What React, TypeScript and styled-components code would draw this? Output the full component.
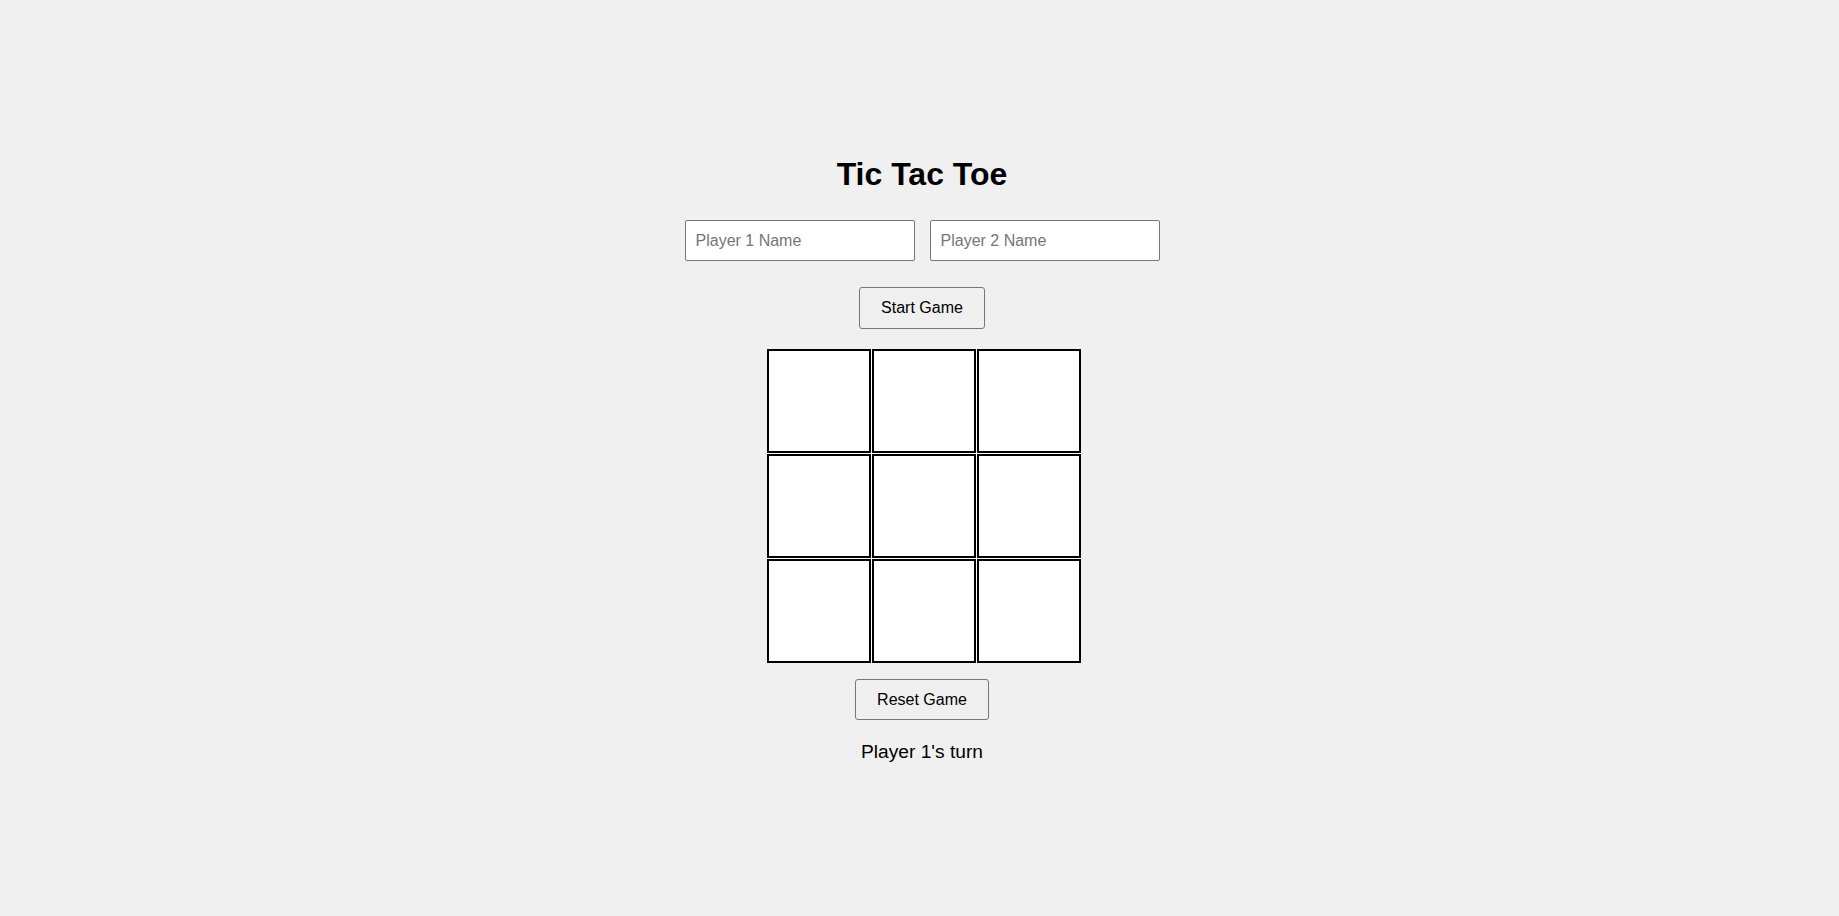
import React, { useState } from "react";
import styled, { createGlobalStyle } from "styled-components";

const GlobalStyle = createGlobalStyle`
  html, body {
    margin: 0;
    padding: 0;
    background: #f0f0f0;
  }
  body {
    font-family: "Liberation Sans", Arial, sans-serif;
    color: #000;
  }
`;

const Page = styled.div`
  display: flex;
  flex-direction: column;
  align-items: center;
  min-height: 916px;
  box-sizing: border-box;
  padding: 156px 0 0 5px;
`;

const Title = styled.h1`
  margin: 0;
  font-size: 32px;
  line-height: 37px;
  font-weight: 700;
`;

const PlayerRow = styled.div`
  display: flex;
  gap: 15px;
  margin-top: 27px;
`;

const NameInput = styled.input`
  box-sizing: border-box;
  width: 230px;
  height: 41px;
  padding: 0 10px;
  font-family: "Liberation Sans", Arial, sans-serif;
  font-size: 16px;
  color: #000;
  background: #fff;
  border: 1px solid #767676;
  border-radius: 2px;
  outline: none;
  &::placeholder {
    color: #757575;
  }
`;

const ActionButton = styled.button<{ $top: number; $height: number }>`
  box-sizing: border-box;
  height: ${(p) => p.$height}px;
  margin-top: ${(p) => p.$top}px;
  padding: 0 21px;
  font-family: "Liberation Sans", Arial, sans-serif;
  font-size: 16px;
  color: #000;
  background: #efefef;
  border: 1px solid #767676;
  border-radius: 3px;
  cursor: pointer;
`;

const Board = styled.div`
  display: grid;
  grid-template-columns: repeat(3, 104px);
  grid-template-rows: repeat(3, 104px);
  gap: 1px;
  margin: 20px 0 0 4px;
  background: #fff;
`;

const Cell = styled.button`
  box-sizing: border-box;
  width: 104px;
  height: 104px;
  padding: 0;
  background: #fff;
  border: 2px solid #000;
  border-radius: 0;
  font-family: "Liberation Sans", Arial, sans-serif;
  font-size: 48px;
  font-weight: 700;
  cursor: pointer;
`;

const Status = styled.p`
  margin: 21px 0 0;
  font-size: 19.2px;
  line-height: 22px;
`;

export default function App() {
  const [p1, setP1] = useState("");
  const [p2, setP2] = useState("");
  const [cells, setCells] = useState<string[]>(Array(9).fill(""));
  const [turn, setTurn] = useState(0);

  const name1 = p1 || "Player 1";
  const name2 = p2 || "Player 2";

  const play = (i: number) => {
    if (cells[i]) return;
    const next = cells.slice();
    next[i] = turn === 0 ? "X" : "O";
    setCells(next);
    setTurn(turn === 0 ? 1 : 0);
  };

  const reset = () => {
    setCells(Array(9).fill(""));
    setTurn(0);
  };

  return (
    <>
      <GlobalStyle />
      <Page>
        <Title>Tic Tac Toe</Title>
        <PlayerRow>
          <NameInput
            placeholder="Player 1 Name"
            value={p1}
            onChange={(e) => setP1(e.target.value)}
          />
          <NameInput
            placeholder="Player 2 Name"
            value={p2}
            onChange={(e) => setP2(e.target.value)}
          />
        </PlayerRow>
        <ActionButton $top={26} $height={42} onClick={reset}>
          Start Game
        </ActionButton>
        <Board>
          {cells.map((c, i) => (
            <Cell key={i} onClick={() => play(i)}>
              {c}
            </Cell>
          ))}
        </Board>
        <ActionButton $top={16} $height={41} onClick={reset}>
          Reset Game
        </ActionButton>
        <Status>{turn === 0 ? `${name1}'s turn` : `${name2}'s turn`}</Status>
      </Page>
    </>
  );
}
